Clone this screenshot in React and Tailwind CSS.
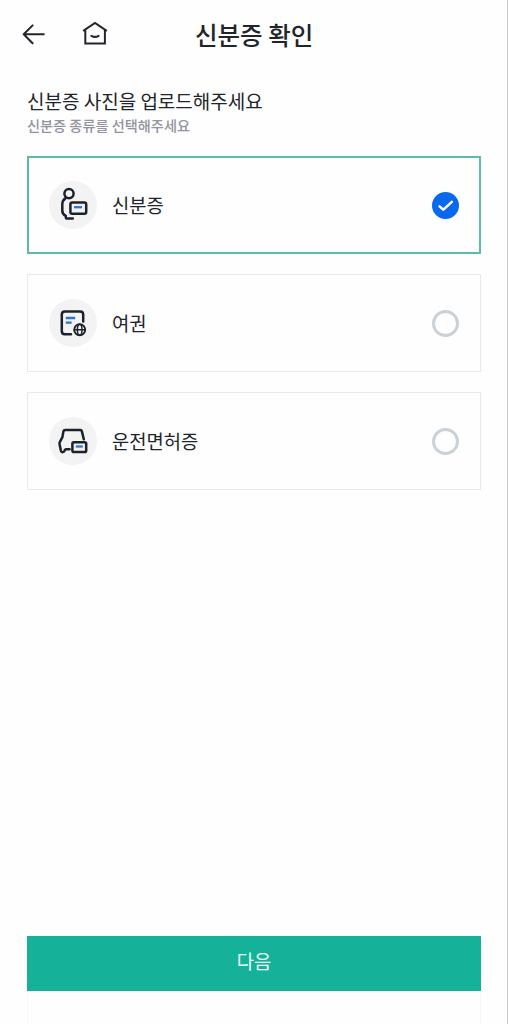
import React, { useState } from 'react';

const IdCardIcon = () => (
  <svg width="48" height="48" viewBox="0 0 48 48" fill="none" stroke="#1c222b" strokeWidth="2.5" strokeLinecap="round" strokeLinejoin="round">
    <circle cx="20" cy="12.6" r="4.6" />
    <path d="M16.4 17.4C14 19 13.3 21 13.3 23.5V29.5C13.3 32.4 14.6 34 16.8 35V36.2C16.8 37.1 17.3 37.5 18.2 37.5H23.8" />
    <rect x="21.4" y="21.4" width="15.8" height="11.4" rx="1.8" />
    <path d="M25 26.2H33" stroke="#2f73d0" strokeWidth="2.3" strokeLinecap="butt" />
  </svg>
);

const PassportIcon = () => (
  <svg width="48" height="48" viewBox="0 0 48 48" fill="none" stroke="#1c222b" strokeWidth="2.5" strokeLinecap="round" strokeLinejoin="round">
    <path d="M34.2 22.4V15.4C34.2 13.4 33.2 12.4 31.2 12.4H15.8C13.8 12.4 12.8 13.4 12.8 15.4V32.2C12.8 34.2 13.8 35.2 15.8 35.2H22" />
    <path d="M16.8 19H26.2M16.8 23.7H22.6" stroke="#2f73d0" strokeWidth="2.3" strokeLinecap="butt" />
    <g strokeWidth="1.9">
      <circle cx="30.7" cy="30.8" r="5.5" />
      <ellipse cx="30.7" cy="30.8" rx="2.3" ry="5.5" strokeWidth="1.5" />
      <path d="M25.5 30.8H36" strokeWidth="1.6" />
    </g>
  </svg>
);

const LicenseIcon = () => (
  <svg width="48" height="48" viewBox="0 0 48 48" fill="none" stroke="#1c222b" strokeWidth="2.5" strokeLinecap="round" strokeLinejoin="round">
    <path d="M34.8 22.2L32.9 14.4C32.7 13.4 32.2 13 31.3 13H16.2C15.2 13 14.6 13.5 14.4 14.4L13.4 20.2L10.8 25.2C10.4 26 10.4 26.6 10.6 27.4L12 34C12.2 34.8 12.6 35.2 13.3 35.2C14.6 35.2 15.2 35 15.4 34.1C15.6 32.8 16.3 32.2 17.4 32.2H20.6" />
    <rect x="23.4" y="25.2" width="13.8" height="9.8" rx="1.6" />
    <path d="M26.8 29.5H33.8" stroke="#3a6fd8" strokeWidth="2.3" strokeLinecap="butt" />
  </svg>
);

const options = [
  { id: 'id', label: '신분증', Icon: IdCardIcon },
  { id: 'passport', label: '여권', Icon: PassportIcon },
  { id: 'license', label: '운전면허증', Icon: LicenseIcon },
];

function Radio({ checked }) {
  if (!checked) {
    return <span className="h-[27px] w-[27px] rounded-full border-3 border-[#cad2d8]" />;
  }
  return (
    <span className="flex h-[27px] w-[27px] items-center justify-center rounded-full bg-[#0868ee]">
      <svg width="27" height="27" viewBox="0 0 28 28" fill="none" stroke="#fff" strokeWidth="2.5" strokeLinecap="round" strokeLinejoin="round">
        <path d="M7.8 14.8L11.6 18.4L20.6 10.2" />
      </svg>
    </span>
  );
}

function App() {
  const [selected, setSelected] = useState('id');

  return (
    <div className="flex h-[1024px] w-[508px] flex-col overflow-hidden border-r border-[#c9cacb] bg-[#fefefe] font-['Noto_Sans_CJK_KR',sans-serif] text-[#20242b]">
      <header className="flex h-[70px] shrink-0 items-center pl-[22px]">
        <button aria-label="back">
          <svg width="24" height="24" viewBox="0 0 24 24" fill="none" stroke="#22262b" strokeWidth="2" strokeLinecap="round" strokeLinejoin="round">
            <path d="M21.8 11.3H1.8M10.6 2.4L1.7 11.3L10.6 20.3" />
          </svg>
        </button>
        <button aria-label="home" className="ml-[35px]">
          <svg width="28" height="28" viewBox="0 0 28 28" fill="none" stroke="#22262b" strokeWidth="2" strokeLinecap="square">
            <path d="M3 9.3L14 2L25 9.3M4.3 9.2V22.4H23.9V9.2" />
            <path d="M10.4 14.8C12.4 16 15.6 16 17.6 14.8" strokeLinecap="round" />
          </svg>
        </button>
        <h1 className="ml-[86px] pb-px text-[24.5px] leading-[36px] font-medium">신분증 확인</h1>
      </header>

      <main className="flex flex-1 flex-col pr-[26px] pl-[27px]">
        <h2 className="mt-[17px] text-[19px] leading-[27px]">신분증 사진을 업로드해주세요</h2>
        <p className="mt-px text-[14.2px] leading-[20px] font-medium text-[#92949e]">신분증 종류를 선택해주세요</p>

        <div className="mt-[21px] flex flex-col gap-5">
          {options.map(({ id, label, Icon }) => (
            <button
              key={id}
              onClick={() => setSelected(id)}
              className={`flex h-[98px] items-center text-left ${
                selected === id ? 'border-2 border-[#5dbba6] px-5' : 'border border-[#e6eaeb] px-[21px]'
              }`}
            >
              <span className="h-12 w-12 rounded-full bg-[#f3f3f4]">
                <Icon />
              </span>
              <span className="ml-[15px] flex-1 pb-px text-[18.8px] leading-[28px]">{label}</span>
              <Radio checked={selected === id} />
            </button>
          ))}
        </div>

        <div className="mt-auto h-[88px]">
          <button className="flex h-[55px] w-full items-center justify-center bg-[#15b299] pb-[5px] text-[18.8px] text-[#eafffb]">
            다음
          </button>
          <div className="h-[33px] border-x border-[#f5f8f8]" />
        </div>
      </main>
    </div>
  );
}

export default App;
